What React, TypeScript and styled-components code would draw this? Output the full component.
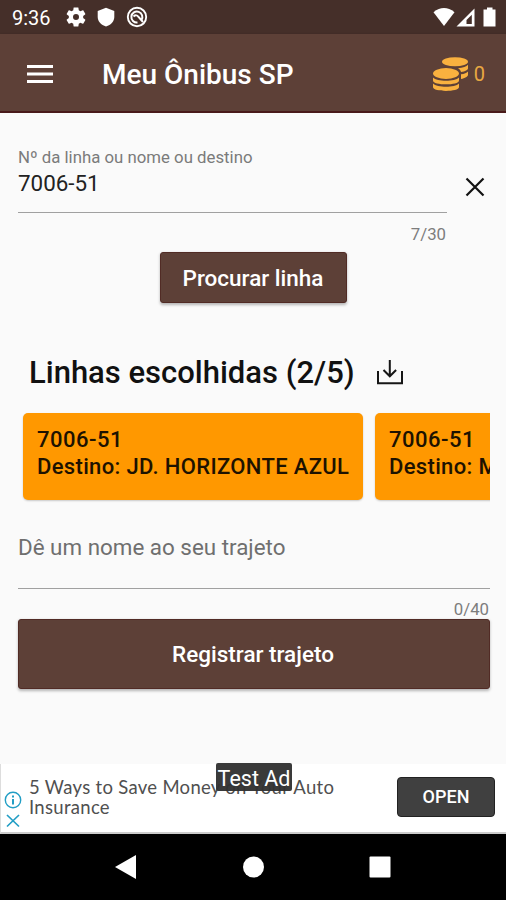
import React from 'react';
import styled, { createGlobalStyle } from 'styled-components';

const GlobalStyle = createGlobalStyle`
  * { box-sizing: border-box; }
  html, body { margin: 0; padding: 0; background: #fafafa; }
  body { font-family: Roboto, "Liberation Sans", sans-serif; color: #161616; overflow: hidden; }
  button { font-family: inherit; border: 0; margin: 0; padding: 0; background: none; }
  svg { display: block; flex: none; }
`;

const Screen = styled.div`
  width: 506px;
  height: 900px;
  display: flex;
  flex-direction: column;
  overflow: hidden;
  white-space: nowrap;
`;

const StatusBar = styled.header`
  height: 34px;
  flex: none;
  display: flex;
  align-items: center;
  justify-content: space-between;
  padding: 0 8px 0 12px;
  background: #452f29;
  color: #fff;
`;

const StatusGroup = styled.div`
  display: flex;
  align-items: center;
`;

const Clock = styled.span`
  width: 54px;
  font-size: 20px;
  line-height: 24px;
  padding-top: 2px;
`;

const NoticeIcons = styled.div`
  display: flex;
  align-items: center;
  gap: 10px;
`;

const AppBar = styled.div`
  height: 79px;
  flex: none;
  display: flex;
  align-items: center;
  padding: 2px 21px 0 27px;
  background: #5d4037;
  border-bottom: 2px solid #491a1a;
  box-shadow: 0 1px 3px rgba(0, 0, 0, 0.25);
`;

const Title = styled.h1`
  flex: 1;
  margin: 2px 0 0 49px;
  font-size: 28px;
  font-weight: 500;
  color: #fff;
`;

const Balance = styled.div`
  display: flex;
  align-items: center;
  gap: 6px;
  color: #e9a842;
  font-size: 20px;
`;

const Content = styled.main`
  height: 651px;
  flex: none;
  display: flex;
  flex-direction: column;
  padding: 32px 16px 0 18px;
  background: #fafafa;
`;

const SearchRow = styled.div`
  display: flex;
  height: 101px;
`;

const Field = styled.label`
  width: 429px;
  display: flex;
  flex-direction: column;
`;

const FieldLabel = styled.span`
  font-size: 16.8px;
  line-height: 24px;
  color: #7b7b7b;
`;

const FieldValue = styled.span<{ $empty?: boolean }>`
  height: ${(p) => (p.$empty ? 57 : 44)}px;
  font-size: 22.4px;
  line-height: 28px;
  color: ${(p) => (p.$empty ? '#6f6f6f' : '#222')};
  border-bottom: 1.5px solid #a0a0a0;
`;

const Counter = styled.span<{ $tight?: boolean }>`
  align-self: flex-end;
  margin: ${(p) => (p.$tight ? 10 : 11)}px 1px 0 0;
  line-height: 20px;
  font-size: 16.8px;
  color: #7d7d7d;
`;

const ClearButton = styled.button`
  margin: 32px 0 0 18px;
  width: 20px;
  height: 20px;
`;

const SolidButton = styled.button<{ $wide?: boolean }>`
  align-self: center;
  flex: none;
  width: ${(p) => (p.$wide ? '472px' : '187px')};
  height: ${(p) => (p.$wide ? 70 : 51)}px;
  margin-top: ${(p) => (p.$wide ? 0 : 6)}px;
  margin-right: ${(p) => (p.$wide ? 0 : 2)}px;
  padding-right: ${(p) => (p.$wide ? 2 : 0)}px;
  background: #5d4037;
  color: #fff;
  border: 1px solid #512b25;
  border-radius: 3px;
  box-shadow: 0 1.5px 3px rgba(0, 0, 0, 0.28);
  font-size: 22.5px;
  font-weight: 500;
`;

const ChosenHeader = styled.div`
  display: flex;
  align-items: center;
  margin: 49px 0 0 11px;
  height: 40px;
`;

const ChosenTitle = styled.h2`
  margin: 0;
  width: 347px;
  font-size: 31px;
  font-weight: 500;
  color: #111;
`;

const CardStrip = styled.div`
  display: flex;
  gap: 12px;
  margin-top: 20px;
  padding: 1px 0 3px 5px;
  overflow: hidden;
`;

const RouteCard = styled.article`
  flex: none;
  width: 340px;
  height: 87px;
  padding: 13px 14px;
  border-radius: 5px;
  background: #ff9800;
  box-shadow: 0 1px 2px rgba(0, 0, 0, 0.2);
  color: #1d1200;
  font-size: 22px;
  font-weight: 500;
  line-height: 27px;
  letter-spacing: 0.34px;
`;

const RouteNumber = styled.div`
  letter-spacing: 0.5px;
`;

const NameField = styled(Field)`
  width: 472px;
  margin-top: 30px;
  height: 86px;
`;

const AdBanner = styled.aside`
  position: relative;
  height: 70px;
  flex: none;
  display: flex;
  align-items: center;
  padding: 0 11px 3px 3px;
  background: #fff;
  border-left: 1px solid #ddd;
  border-bottom: 2px solid #ccc;
`;

const AdChoices = styled.div`
  width: 25px;
  padding-top: 24px;
`;

const AdText = styled.p`
  flex: 1;
  margin: 0;
  font-family: Lato, sans-serif;
  font-size: 18.5px;
  line-height: 20px;
  letter-spacing: 0.3px;
  color: #505050;
`;

const OpenButton = styled.button`
  width: 98px;
  height: 40px;
  border-radius: 4px;
  border: 1px solid #222;
  background: #404040;
  color: #fff;
  font-size: 18px;
  font-weight: 500;
`;

const TestBadge = styled.span`
  position: absolute;
  top: -1px;
  left: 215px;
  width: 76px;
  height: 28px;
  border-radius: 2px;
  background: rgba(50, 50, 50, 0.96);
  color: #fff;
  font-size: 21.5px;
  line-height: 31px;
  text-align: center;
`;

const NavBar = styled.nav`
  height: 66px;
  flex: none;
  display: flex;
  align-items: center;
  padding-left: 115px;
  background: #000;
`;

const GearIcon = () => (
  <svg width="20" height="20" viewBox="2 2 20 20" fill="#fff">
    <path d="M19.14 12.94c.04-.3.06-.61.06-.94 0-.32-.02-.64-.07-.94l2.03-1.58c.18-.14.23-.41.12-.61l-1.92-3.32c-.12-.22-.37-.29-.59-.22l-2.39.96c-.5-.38-1.03-.7-1.62-.94l-.36-2.54c-.04-.24-.24-.41-.48-.41h-3.84c-.24 0-.43.17-.47.41l-.36 2.54c-.59.24-1.13.57-1.62.94l-2.39-.96c-.22-.08-.47 0-.59.22L2.74 8.87c-.12.21-.08.47.12.61l2.03 1.58c-.05.3-.09.63-.09.94s.02.64.07.94l-2.03 1.58c-.18.14-.23.41-.12.61l1.92 3.32c.12.22.37.29.59.22l2.39-.96c.5.38 1.03.7 1.62.94l.36 2.54c.05.24.24.41.48.41h3.84c.24 0 .44-.17.47-.41l.36-2.54c.59-.24 1.13-.56 1.62-.94l2.39.96c.22.08.47 0 .59-.22l1.92-3.32c.12-.22.07-.47-.12-.61l-2.01-1.58zM12 15a3 3 0 1 1 0-6 3 3 0 0 1 0 6z" />
  </svg>
);

const ShieldIcon = () => (
  <svg width="20" height="20" viewBox="0 0 20 20" fill="#fff">
    <path d="M10 .8 18.3 4v6c0 4.300-3.200 7.900-8.300 9.500C4.900 17.900 1.700 14.300 1.700 10V4z" />
  </svg>
);

const SyncCircleIcon = () => (
  <svg width="22" height="22" viewBox="0 0 22 22" fill="none" stroke="#fff">
    <circle cx="11" cy="11" r="9.200" strokeWidth="1.900" />
    <path d="M15.500 14A5.500 5.500 0 1 0 11.500 16.500" strokeWidth="2" />
    <path d="M7.500 10.500q3-2.500 5 .5l4.500 5" strokeWidth="2" />
  </svg>
);

const SignalIcons = () => (
  <svg width="66" height="22" viewBox="0 0 66 22">
    <path d="M1.500 6.200Q12 -2 22.500 6.200L12 20z" fill="#fff" />
    <path d="M24.500 20.500 42.500 2.500v18z" fill="#fff" />
    <path d="M34.500 18V14L39.800 8.700V18z" fill="#452f29" />
    <path d="M55 1.500h5.500v2h3v17H51.500v-17H55z" fill="#fff" />
  </svg>
);

const MenuIcon = () => (
  <svg width="26" height="20" viewBox="0 0 26 20" fill="#fff">
    <path d="M0 1h26v3H0zM0 8.500h26v3H0zM0 16h26v3H0z" />
  </svg>
);

const CoinsIcon = () => (
  <svg width="36" height="36" viewBox="0 0 36 36" fill="#f9b13f">
    <ellipse cx="23" cy="5.800" rx="13" ry="4.500" />
    <path d="M26 12.200c5-.3 8.500-1.500 10-3.400v3.400c0 1.900-2.800 3.200-7 3.700-.5-1.600-1.500-2.800-3-3.700z" />
    <path d="M29 18.300c3.500-.6 5.700-1.500 7-2.900v3.400c0 1.900-3 3.600-7 4.200z" />
    <ellipse cx="14" cy="17.500" rx="13" ry="5.400" />
    <path d="M1 21.500c4 4.300 22 4.300 26 0v2.900c0 5.200-26 5.200-26 0z" />
    <path d="M1 27.500c4 4.300 22 4.300 26 0v3.500c0 5.200-26 5.200-26 0z" />
  </svg>
);

const CloseIcon = () => (
  <svg width="20" height="20" viewBox="0 0 20 20">
    <path d="M1.500 1.500 18.500 18.500M18.500 1.500 1.500 18.500" stroke="#111" strokeWidth="2.200" />
  </svg>
);

const DownloadIcon = () => (
  <svg width="28" height="28" viewBox="0 0 28 28" fill="none" stroke="#161616" strokeWidth="2">
    <path d="M2 13v12.300h24V13M13.800 2v16M7.500 12l6.300 6.300L20.100 12" />
  </svg>
);

const AdChoiceIcons = () => (
  <svg width="19" height="38" viewBox="0 0 19 38" fill="none" stroke="#229ec5">
    <circle cx="9" cy="10" r="7.700" strokeWidth="1.400" />
    <path d="M9 9v5.500M9 5.500v2" strokeWidth="2" />
    <path d="m3 25 12 11.500M15 25 3 36.500" strokeWidth="1.700" />
  </svg>
);

const NavIcons = () => (
  <svg width="277" height="26" viewBox="0 0 277 26" fill="#fff">
    <path d="M0 13 21 1v24z" />
    <circle cx="138.500" cy="13" r="10.500" />
    <rect x="254.500" y="2.500" width="21" height="21" rx="1" />
  </svg>
);

export default function App() {
  return (
    <Screen>
      <GlobalStyle />
      <StatusBar>
        <StatusGroup>
          <Clock>9:36</Clock>
          <NoticeIcons>
            <GearIcon />
            <ShieldIcon />
            <SyncCircleIcon />
          </NoticeIcons>
        </StatusGroup>
        <SignalIcons />
      </StatusBar>
      <AppBar>
        <MenuIcon />
        <Title>Meu Ônibus SP</Title>
        <Balance>
          <CoinsIcon />
          <span>0</span>
        </Balance>
      </AppBar>
      <Content>
        <SearchRow>
          <Field>
            <FieldLabel>Nº da linha ou nome ou destino</FieldLabel>
            <FieldValue>7006-51</FieldValue>
            <Counter>7/30</Counter>
          </Field>
          <ClearButton aria-label="Limpar">
            <CloseIcon />
          </ClearButton>
        </SearchRow>
        <SolidButton>Procurar linha</SolidButton>
        <ChosenHeader>
          <ChosenTitle>Linhas escolhidas (2/5)</ChosenTitle>
          <DownloadIcon />
        </ChosenHeader>
        <CardStrip>
          <RouteCard>
            <RouteNumber>7006-51</RouteNumber>
            <div>Destino: JD. HORIZONTE AZUL</div>
          </RouteCard>
          <RouteCard>
            <RouteNumber>7006-51</RouteNumber>
            <div>Destino: METRÔ</div>
          </RouteCard>
        </CardStrip>
        <NameField>
          <FieldValue $empty>Dê um nome ao seu trajeto</FieldValue>
          <Counter $tight>0/40</Counter>
        </NameField>
        <SolidButton $wide>Registrar trajeto</SolidButton>
      </Content>
      <AdBanner>
        <AdChoices>
          <AdChoiceIcons />
        </AdChoices>
        <AdText>
          5 Ways to Save Money on Your Auto
          <br />
          Insurance
        </AdText>
        <OpenButton>OPEN</OpenButton>
        <TestBadge>Test Ad</TestBadge>
      </AdBanner>
      <NavBar>
        <NavIcons />
      </NavBar>
    </Screen>
  );
}
